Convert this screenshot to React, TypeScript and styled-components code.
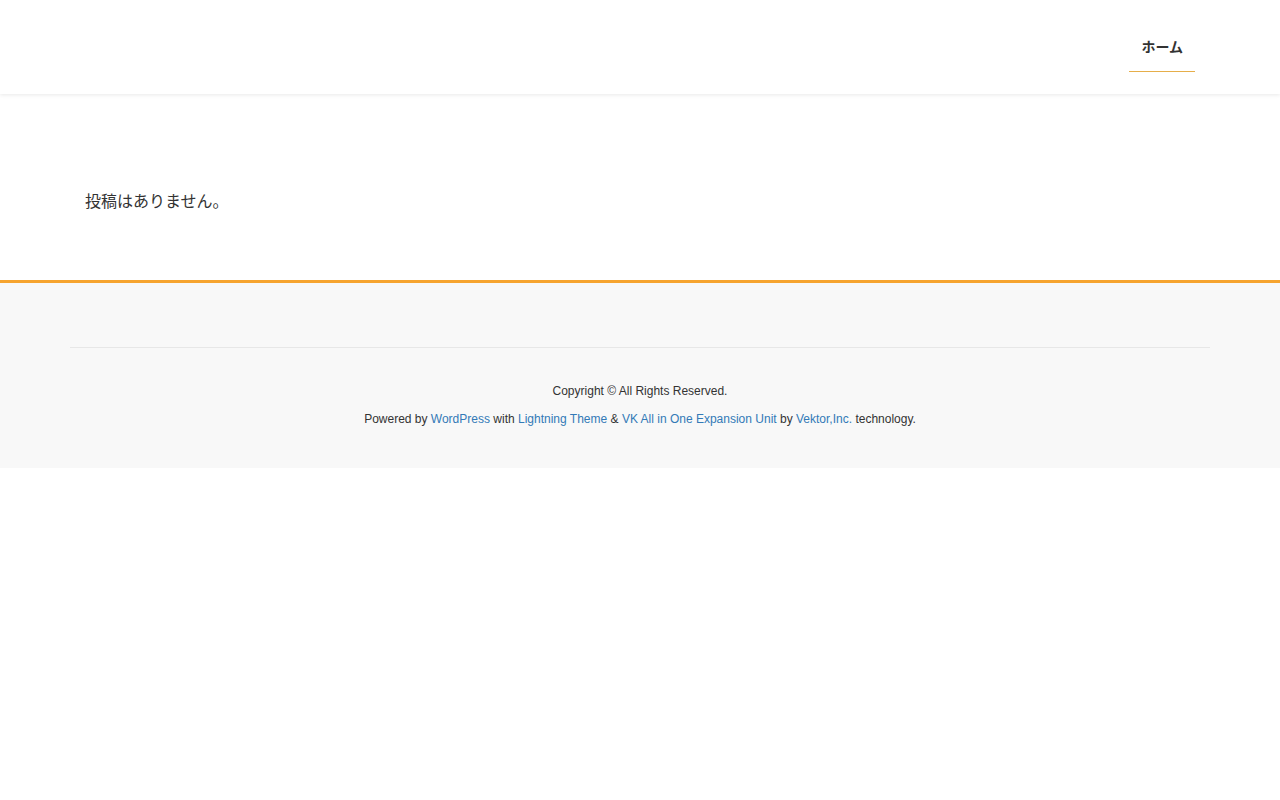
import React from 'react';
import styled, { createGlobalStyle } from 'styled-components';

const KEY_COLOR = '#f6a42f';

const GlobalStyle = createGlobalStyle`
  html, body {
    margin: 0;
    padding: 0;
    background: #ffffff;
  }
  body {
    font-family: 'Liberation Sans', Arial, 'Noto Sans CJK JP', sans-serif;
    color: #333333;
  }
  * {
    box-sizing: border-box;
  }
`;

const Container = styled.div`
  width: 1140px;
  margin: 0 auto;
  padding: 0 15px;
`;

const SiteHeader = styled.header`
  position: relative;
  z-index: 2;
  height: 94px;
  background: #ffffff;
  box-shadow: 0 1px 4px rgba(0, 0, 0, 0.09);
`;

const HeaderInner = styled(Container)`
  display: flex;
  justify-content: flex-end;
  height: 100%;
`;

const GlobalNav = styled.nav`
  display: flex;
  padding-top: 36px;
`;

const NavItem = styled.a<{ current?: boolean }>`
  display: block;
  height: 36px;
  padding: 0 12px;
  font-family: 'Liberation Sans', 'Noto Sans CJK JP', sans-serif;
  font-size: 14px;
  font-weight: bold;
  line-height: 22px;
  color: #333333;
  text-decoration: none;
  border-bottom: 1px solid ${(props) => (props.current ? '#e6ae4a' : 'transparent')};
`;

const SiteBody = styled.main`
  padding: 93px 0 66px;
`;

const NoPosts = styled.p`
  margin: 0;
  font-family: 'Noto Sans CJK JP', sans-serif;
  font-size: 16px;
  line-height: 27px;
  color: #333333;
`;

const SiteFooter = styled.footer`
  background: #f8f8f8;
  border-top: 3px solid ${KEY_COLOR};
`;

const FooterWidgets = styled.div`
  height: 64px;
`;

const Copyright = styled.div`
  width: 1140px;
  margin: 0 auto;
  border-top: 1px solid #e7e7e7;
  padding: 34px 0 40px;
  text-align: center;
`;

const FooterLine = styled.p`
  margin: 0;
  font-size: 12px;
  line-height: 18px;
  color: #333333;

  & + & {
    margin-top: 10px;
  }
`;

const FooterLink = styled.a`
  color: #337ab7;
  text-decoration: none;
`;

const App: React.FC = () => {
  return (
    <>
      <GlobalStyle />
      <SiteHeader>
        <HeaderInner>
          <GlobalNav>
            <NavItem href="#" current>
              ホーム
            </NavItem>
          </GlobalNav>
        </HeaderInner>
      </SiteHeader>

      <SiteBody>
        <Container>
          <NoPosts>投稿はありません。</NoPosts>
        </Container>
      </SiteBody>

      <SiteFooter>
        <FooterWidgets />
        <Copyright>
          <FooterLine>Copyright © All Rights Reserved.</FooterLine>
          <FooterLine>
            Powered by <FooterLink href="#">WordPress</FooterLink> with{' '}
            <FooterLink href="#">Lightning Theme</FooterLink> &amp;{' '}
            <FooterLink href="#">VK All in One Expansion Unit</FooterLink> by{' '}
            <FooterLink href="#">Vektor,Inc.</FooterLink> technology.
          </FooterLine>
        </Copyright>
      </SiteFooter>
    </>
  );
};

export default App;
